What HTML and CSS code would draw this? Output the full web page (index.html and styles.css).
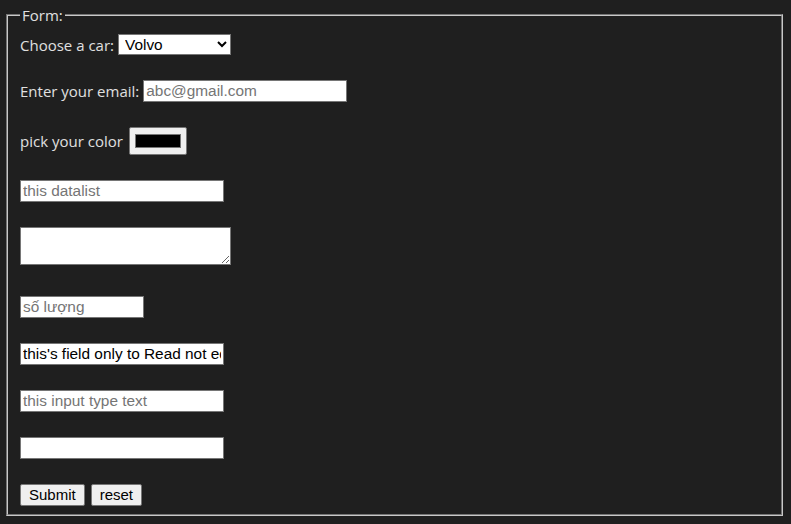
FILE: index.html
```html
<!DOCTYPE html>
<html>
<head>
<meta charset="utf-8">
<link rel="stylesheet" href="styles.css">
</head>
<body>
<form class="page">
  <fieldset class="box">
    <legend class="legend">Form:</legend>
    <div class="rows">
      <div class="row">
        <label class="lbl" for="car">Choose a car:</label>
        <select id="car" class="ctl sel">
          <option>Volvo</option>
          <option>Saab</option>
          <option>Fiat</option>
          <option>Audi</option>
        </select>
      </div>
      <div class="row">
        <label class="lbl" for="em">Enter your email:</label>
        <input id="em" class="ctl txt" type="email" placeholder="abc@gmail.com">
      </div>
      <div class="row">
        <label class="lbl">pick your color</label>
        <span class="color-btn"><span class="swatch"></span></span>
      </div>
      <div class="row">
        <input class="ctl txt" list="dl" placeholder="this datalist">
        <datalist id="dl"><option value="a"></option></datalist>
      </div>
      <div class="row row-ta">
        <textarea class="ctl ta"></textarea>
      </div>
      <div class="row row-after-ta">
        <input class="ctl num" type="text" placeholder="số lượng">
      </div>
      <div class="row">
        <input class="ctl txt ro" type="text" value="this's field only to Read not edit" readonly>
      </div>
      <div class="row">
        <input class="ctl txt" type="text" placeholder="this input type text">
      </div>
      <div class="row">
        <input class="ctl txt" type="text">
      </div>
      <div class="row btns">
        <button type="button" class="btn">Submit</button>
        <button type="button" class="btn">reset</button>
      </div>
    </div>
  </fieldset>
</form>
</body>
</html>
```
FILE: styles.css
```css
html, body {
  margin: 0;
  padding: 0;
  background: #1f1f1f;
}
body {
  font-family: "Open Sans", "Noto Sans", sans-serif;
  font-size: 15px;
  color: #e0e0e0;
}
.page {
  padding: 6px 8px 7px 6px;
}
.box {
  margin: 0;
  border: 2px groove #c8c8c8;
  padding: 10px 12px 8px 12px;
  min-width: 0;
}
.legend {
  padding: 0 2px;
  font-size: 15px;
  color: #e0e0e0;
  line-height: 18px;
}
.rows {
  display: flex;
  flex-direction: column;
  align-items: flex-start;
  gap: 25px;
}
.row {
  display: flex;
  align-items: center;
  gap: 4px;
  line-height: 20px;
}
.row-after-ta {
  margin-top: 6px;
}
.lbl {
  white-space: nowrap;
}
.ctl {
  box-sizing: border-box;
  font-family: "Liberation Sans", Arial, sans-serif;
  font-size: 15.4px;
  color: #000;
  background: #fff;
  margin: 0;
  outline: none;
}
.ctl::placeholder {
  color: #757575;
}
.txt {
  width: 204px;
  height: 22px;
  border: 1px solid #767676;
  padding: 0 2px;
}
.num {
  width: 124px;
  height: 22px;
  border: 1px solid #767676;
  padding: 0 2px;
}
.sel {
  width: 113px;
  height: 21px;
  border: 1px solid #767676;
  padding: 0 2px;
  border-radius: 0;
}
.ta {
  width: 211px;
  height: 38px;
  border: 1px solid #767676;
  padding: 2px;
  resize: both;
}
.color-btn {
  box-sizing: border-box;
  display: inline-flex;
  width: 58px;
  height: 28px;
  margin-left: 2px;
  padding: 6px 5px;
  background: #efefef;
  border: 1px solid #767676;
  border-radius: 2px;
}
.swatch {
  flex: 1;
  background: #000;
  border: 1px solid #777;
}
.btns {
  gap: 6px;
}
.btn {
  box-sizing: border-box;
  height: 22px;
  font-family: "Liberation Sans", Arial, sans-serif;
  font-size: 15px;
  line-height: 18px;
  color: #000;
  background: #efefef;
  border: 1px solid #767676;
  border-radius: 2px;
  padding: 0 8px;
  margin: 0;
}
```
